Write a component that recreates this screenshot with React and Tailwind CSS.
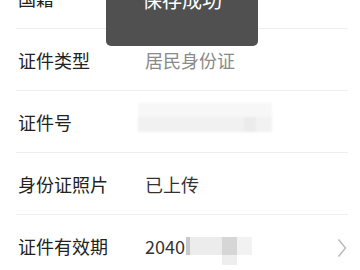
import React from "react";

const rows = [
  { label: "国籍" },
  { label: "证件类型", value: "居民身份证", tone: "text-[#8a8a8a]" },
  { label: "证件号", blur: "id" },
  { label: "身份证照片", value: "已上传", tone: "text-[#333]" },
  { label: "证件有效期", value: "2040", tone: "text-[#333]", blur: "date", arrow: true },
];

const Row = ({ label, value, tone, blur, arrow }) => (
  <div className="relative flex h-[62px] items-center border-b border-[#efefef] pl-[2px]">
    <div className="w-[127px] shrink-0 text-[18px] leading-[24px] text-[#222]">{label}</div>
    {value && <div className={`text-[18px] leading-[24px] ${tone}`}>{value}</div>}
    {blur === "id" && (
      <div className="absolute left-[122px] top-[12px] h-[29px] w-[134px] blur-[1px]">
        <div className="h-[14px] w-full bg-[#f7f7f7]"></div>
        <div className="flex h-[15px] w-full bg-[#f0f0f0]">
          <div className="w-[106px] bg-[#f1f1f1]"></div>
          <div className="w-[12px] bg-[#ebebeb]"></div>
          <div className="flex-1 bg-[#f2f2f2]"></div>
        </div>
      </div>
    )}
    {blur === "date" && (
      <div className="relative ml-[1px] flex h-[18px] items-stretch">
        <div className="w-[4px] bg-[#c9c9c9]"></div>
        <div className="w-[32px] bg-[#ececec]"></div>
        <div className="relative w-[15px] bg-[#d6d6d6]">
          <div className="absolute left-0 top-[18px] h-[10px] w-[15px] bg-[#eeeeee]"></div>
        </div>
        <div className="w-[15px] bg-[#f2f2f2]"></div>
      </div>
    )}
    {arrow && (
      <svg className="absolute right-[1px] top-[23px]" width="10" height="20" viewBox="0 0 10 20" fill="none">
        <path d="M1.5 1.5 L8.5 10 L1.5 18.5" stroke="#bdbdbd" strokeWidth="1.6" />
      </svg>
    )}
  </div>
);

export default function App() {
  return (
    <div
      className="relative h-[270px] w-[360px] overflow-hidden bg-white"
      style={{ fontFamily: '"Noto Sans CJK SC", "Noto Sans", sans-serif' }}
    >
      <div className="ml-4 mr-3 mt-[-33px]">
        {rows.map((r) => (
          <Row key={r.label} {...r} />
        ))}
      </div>

      {/* Toast */}
      <div className="absolute left-[106px] top-[-40px] flex h-[86px] w-[152px] justify-center rounded-[5px] bg-[#505050]">
        <div className="mt-[29px] text-[20px] leading-[22px] text-white">保存成功</div>
      </div>
    </div>
  );
}
